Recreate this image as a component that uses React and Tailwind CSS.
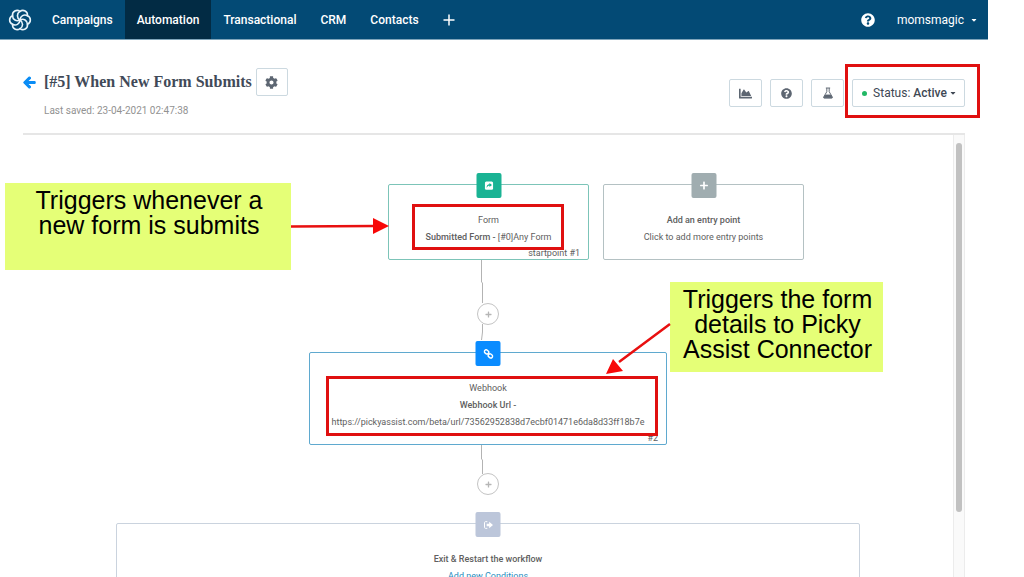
import { FaArrowLeft, FaCaretDown, FaChartArea, FaCog, FaPlus, FaQuestionCircle } from "react-icons/fa";

const navItems = ["Campaigns", "Automation", "Transactional", "CRM", "Contacts"];

function Logo() {
  return (
    <svg viewBox="0 0 24 24" className="size-6" fill="none" stroke="#e8f4fb" strokeWidth="1.6" strokeLinecap="round">
      {[0, 60, 120, 180, 240, 300].map((angle) => (
        <path
          key={angle}
          transform={`rotate(${angle} 12 12)`}
          d="M19.4 7.7A4.6 4.6 0 0 0 12 3.4C8.6 5.4 8.6 9.8 12 12"
        />
      ))}
    </svg>
  );
}

function FlaskIcon() {
  return (
    <svg viewBox="0 0 14 14" className="size-3" fill="none" stroke="currentColor" strokeWidth="1.1">
      <path d="M4.5 1.2h5M5.6 1.2v4.3L2 11.6c-.4.7 0 1.2.7 1.2h8.6c.7 0 1.1-.5.7-1.2L8.4 5.5V1.2" />
      <path d="M4 9.4h6l1.8 3.2H2.2z" fill="currentColor" />
    </svg>
  );
}

function ShareIcon() {
  return (
    <svg viewBox="0 0 12 12" className="size-[9px]">
      <rect x="0.5" y="0.5" width="11" height="11" rx="2" fill="white" />
      <path d="M3 9.3C2.4 6 4 4.2 6.6 4.2V2.6L10 5.3L6.6 8V6.3C4.8 6.3 3.7 7 3 9.3Z" fill="#1ab394" />
    </svg>
  );
}

function LinkIcon() {
  return (
    <svg viewBox="0 0 12 12" className="size-[10px]" fill="none" stroke="white" strokeWidth="1.7">
      <rect x="1" y="1.4" width="5.4" height="4.2" rx="2" transform="rotate(40 3.7 3.5)" />
      <rect x="5.6" y="6.2" width="5.4" height="4.2" rx="2" transform="rotate(40 8.3 8.3)" />
      <path d="M5 5l2 2" />
    </svg>
  );
}

function ExitIcon() {
  return (
    <svg viewBox="0 0 12 12" className="size-[10px]">
      <path d="M4.6 2H2.4C1.6 2 1.2 2.5 1.2 3.2v5.6c0 .7.4 1.2 1.2 1.2h2.2" fill="none" stroke="white" strokeWidth="1.2" />
      <path d="M3.8 4.6h3V2l4.6 4-4.6 4V7.4h-3z" fill="white" />
    </svg>
  );
}

function IconButton({ label, className = "w-[33px]", children }) {
  return (
    <button
      type="button"
      aria-label={label}
      className={`flex h-7 items-center justify-center rounded-xs border border-[#ccd9e0] bg-white text-[#5d6672] ${className}`}
    >
      {children}
    </button>
  );
}

function Node({ className, badge, badgeClass, tag, children }) {
  return (
    <div className={`absolute rounded-xs border bg-white pt-[27px] text-center text-[9px] leading-[17px] text-[#606060] ${className}`}>
      <div className={`absolute -top-3 left-1/2 flex size-[25px] -translate-x-1/2 items-center justify-center rounded-xs ${badgeClass}`}>
        {badge}
      </div>
      {children}
      {tag && <span className="absolute right-2 -bottom-[3px]">{tag}</span>}
    </div>
  );
}

function AddStep({ className }) {
  return (
    <button
      type="button"
      aria-label="Add step"
      className={`absolute flex size-[22px] items-center justify-center rounded-full border border-[#c4c4c4] bg-white text-[#b5b5b5] ${className}`}
    >
      <FaPlus className="size-[7px]" />
    </button>
  );
}

function Note({ className, children }) {
  return (
    <div className={`absolute bg-[#e5ff77] pt-[5px] pl-0.5 text-center font-['Liberation_Sans',Arial,sans-serif] text-[25px] leading-[25px] text-black ${className}`}>
      {children}
    </div>
  );
}

function Canvas() {
  return (
    <div className="relative mx-auto h-full w-[930px]">
      <svg className="absolute inset-0 size-full overflow-visible" fill="none" stroke="#b3b3b3">
        <path d="M458.5 125v22l1 1v20M459.5 189v8l-1 8" />
        <path d="M458.5 310v14l1 1v14" />
      </svg>

      <Node
        className="top-[49px] left-[365px] h-[76px] w-[201px] border-[#7cc4b8]"
        badgeClass="bg-[#1ab394]"
        badge={<ShareIcon />}
        tag="startpoint #1"
      >
        <p>Form</p>
        <p><b className="font-medium">Submitted Form - </b>[#0]Any Form</p>
      </Node>

      <Node
        className="top-[49px] left-[580px] h-[76px] w-[201px] border-[#b4c1c3]"
        badgeClass="bg-[#a0adb0]"
        badge={<FaPlus className="size-[9px] text-white" />}
      >
        <p className="font-medium">Add an entry point</p>
        <p>Click to add more entry points</p>
      </Node>

      <AddStep className="top-[168px] left-[454px]" />

      <Node
        className="top-[217px] left-[286px] h-[93px] w-[358px] border-[#5fa9cf]"
        badgeClass="bg-[#0a8cff]"
        badge={<LinkIcon />}
        tag="#2"
      >
        <p>Webhook</p>
        <p className="font-medium">Webhook Url -</p>
        <p>https://pickyassist.com/beta/url/73562952838d7ecbf01471e6da8d33ff18b7e</p>
      </Node>

      <AddStep className="top-[338px] left-[454px]" />

      <Node
        className="top-[388px] left-[93px] h-[93px] w-[744px] border-[#cad3de]"
        badgeClass="bg-[#bcc6da]"
        badge={<ExitIcon />}
      >
        <p className="font-medium">Exit &amp; Restart the workflow</p>
        <a href="#conditions" className="text-[#2a8ec0]">Add new Conditions</a>
      </Node>

      {/* callouts */}
      <div className="absolute top-[69px] left-[389px] h-[46px] w-[152px] border-3 border-[#e01010]" />
      <div className="absolute top-[241px] left-[303px] h-[60px] w-[332px] border-3 border-[#e01010]" />
      <Note className="top-[48px] -left-[18px] h-[87px] w-[286px]">
        Triggers whenever a<br />new form is submits
      </Note>
      <Note className="top-[147px] left-[647px] h-[90px] w-[213px]">
        Triggers the form<br />details to Picky<br />Assist Connector
      </Note>
      <svg className="pointer-events-none absolute inset-0 size-full" stroke="#e81010" strokeWidth="2.5">
        <path d="M268 91.5L352 91M647 189L596 227" />
        <path d="M350 83l16 8-16 8zM583 239l7-15 10 12z" fill="#f80808" stroke="none" />
      </svg>
    </div>
  );
}

export default function App() {
  return (
    <div className="flex h-screen flex-col overflow-hidden bg-white pr-9 font-[Roboto,sans-serif]">
      <header className="flex h-10 shrink-0 items-center border-b border-[#7fa5bb] bg-[#034a75] text-xs text-white">
        <a href="#home" aria-label="Home" className="px-2">
          <Logo />
        </a>
        <nav className="flex h-full">
          {navItems.map((item) => (
            <a
              key={item}
              href={`#${item.toLowerCase()}`}
              className={`flex items-center px-3 font-medium ${item === "Automation" ? "bg-[#022b44]" : ""}`}
            >
              {item}
            </a>
          ))}
        </nav>
        <button type="button" aria-label="More" className="px-3">
          <svg viewBox="0 0 12 12" className="size-3" stroke="white" strokeWidth="1.5">
            <path d="M6 0.5v11M0.5 6h11" />
          </svg>
        </button>
        <div className="ml-auto flex items-center gap-[22px] pr-2.5">
          <button type="button" aria-label="Help">
            <FaQuestionCircle className="size-[14px]" />
          </button>
          <button type="button" className="flex items-center gap-1.5">
            momsmagic <FaCaretDown className="size-2" />
          </button>
        </div>
      </header>

      <div className="mr-[23px] ml-[23px] flex shrink-0 items-center justify-between border-b-2 border-[#e6e6e6] pt-7 pb-[15px]">
        <div>
          <div className="flex items-center">
            <a href="#back" aria-label="Back" className="mr-2 text-[#0a8cf5]">
              <FaArrowLeft className="size-[13px]" stroke="currentColor" strokeWidth="40" />
            </a>
            <h1 className="mr-1 font-['Liberation_Serif',serif] text-base leading-7 font-bold text-[#414a58]">
              [#5] When New Form Submits
            </h1>
            <IconButton label="Settings" className="w-8">
              <FaCog className="size-[13px]" />
            </IconButton>
          </div>
          <p className="mt-2 pl-[21px] text-[10px] leading-[14px] text-[#929292]">Last saved: 23-04-2021 02:47:38</p>
        </div>

        <div className="flex gap-2">
          <IconButton label="Statistics"><FaChartArea className="size-[13px]" /></IconButton>
          <IconButton label="Help"><FaQuestionCircle className="size-[11px]" /></IconButton>
          <IconButton label="Test"><FlaskIcon /></IconButton>
          <div className="relative">
            <button
              type="button"
              className="flex h-7 w-[113px] items-center justify-center rounded-xs border border-[#ccd9e0] pl-0.5 text-xs text-[#404854]"
            >
              <span className="mr-1.5 size-[5px] rounded-full bg-[#22b865]" />
              <span>Status: <b className="font-medium">Active</b></span>
              <FaCaretDown className="ml-0.5 size-2" />
            </button>
            <div className="pointer-events-none absolute -top-[15px] -right-[15px] -bottom-[11px] -left-[7px] border-3 border-[#e01010]" />
          </div>
        </div>
      </div>

      <main className="flex min-h-0 flex-1 pr-[23px] pl-[23px]">
        <div className="min-w-0 flex-1">
          <Canvas />
        </div>
        <div className="w-3 shrink-0 border-x border-[#ececec] bg-[#fafafa] pt-2">
          <div className="mx-auto h-[85%] w-1.5 rounded-full bg-[#c1c1c1]" />
        </div>
      </main>
    </div>
  );
}
